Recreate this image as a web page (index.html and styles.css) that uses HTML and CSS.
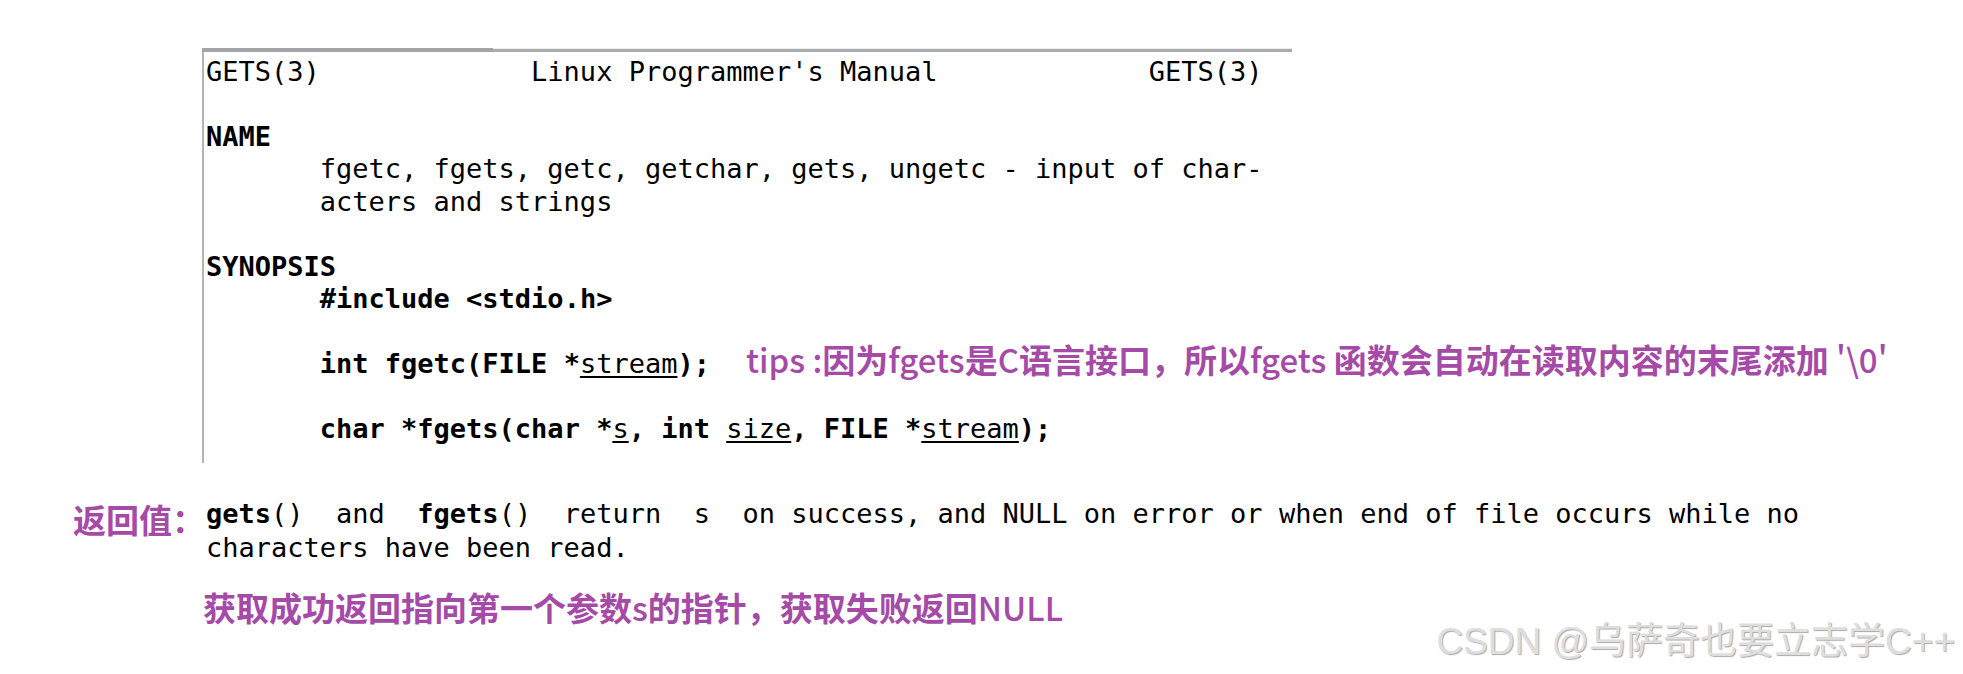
FILE: index.html
```html
<!DOCTYPE html>
<html lang="zh-CN">
<head>
<meta charset="utf-8">
<title>GETS(3)</title>
<link rel="stylesheet" href="styles.css">
</head>
<body>
<div class="page">
  <section class="man">
    <div class="rule"><span class="rule-dark"></span><span class="rule-light"></span></div>
    <div class="man-body">
<pre class="mono">GETS(3)             Linux Programmer's Manual             GETS(3)

<b>NAME</b>
       fgetc, fgets, getc, getchar, gets, ungetc - input of char-
       acters and strings

<b>SYNOPSIS</b>
       <b>#include &lt;stdio.h&gt;</b>

       <b>int fgetc(FILE *</b><u>stream</u><b>);</b><span class="tips"><span class="lat">tips :</span>因为<span class="lat">fgets</span>是<span class="lat">C</span>语言接口，所以<span class="lat">fgets </span>函数会自动在读取内容的末尾添加<span class="lat"> '\0'</span></span>

       <b>char *fgets(char *</b><u>s</u><b>, int </b><u>size</u><b>, FILE *</b><u>stream</u><b>);</b></pre>
    </div>
  </section>

  <section class="ret">
    <div class="ret-label">返回值：</div>
<pre class="mono ret-text"><b>gets</b>()  and  <b>fgets</b>()  return  s  on success, and NULL on error or when end of file occurs while no
characters have been read.</pre>
  </section>

  <div class="summary">获取成功返回指向第一个参数<span class="lat">s</span>的指针，获取失败返回<span class="lat">NULL</span></div>

  <div class="watermark">CSDN @乌萨奇也要立志学C++</div>
</div>
</body>
</html>
```

FILE: styles.css
```css
* { box-sizing: border-box; }

html, body {
  margin: 0;
  padding: 0;
  background: #ffffff;
}

.page {
  position: relative;
  width: 1963px;
  height: 674px;
  overflow: hidden;
  display: flex;
  flex-direction: column;
  align-items: flex-start;
}

.man {
  margin: 48px 0 0 202px;
  width: 1090px;
}

.rule {
  display: flex;
  height: 4px;
}

.rule-dark {
  width: 291px;
  background: #a2a4a6;
}

.rule-light {
  flex: 1;
  background: #a9abad;
  border-top: 1px solid #ececec;
}

.man-body {
  border-left: 2px solid #b4b4b4;
  padding: 4px 0 18px 2px;
}

.mono {
  margin: 0;
  font-family: "DejaVu Sans Mono", monospace;
  font-size: 27px;
  line-height: 32.45px;
  color: #000;
}

.mono b { font-weight: 700; }

.mono u {
  text-decoration: underline;
  text-decoration-thickness: 2px;
  text-underline-offset: 3px;
}

.tips {
  margin-left: 36px;
  font-family: "Noto Sans CJK SC", sans-serif;
  font-size: 33px;
  font-weight: 700;
  line-height: 0;
  color: #a54ba7;
}

.lat { font-weight: 500; }

.ret {
  display: flex;
  align-items: flex-start;
  margin-top: 34px;
}

.ret-label {
  width: 133px;
  margin-left: 73px;
  padding-top: 2px;
  font-family: "Noto Sans CJK SC", sans-serif;
  font-size: 33px;
  font-weight: 700;
  line-height: 40px;
  color: #a54ba7;
  white-space: nowrap;
}

.ret-text {
  line-height: 34px;
}

.summary {
  margin: 20px 0 0 203px;
  font-family: "Noto Sans CJK SC", sans-serif;
  font-size: 33px;
  font-weight: 700;
  line-height: 44px;
  color: #a54ba7;
  white-space: nowrap;
}

.watermark {
  position: absolute;
  right: 8px;
  top: 619px;
  font-family: "Liberation Sans", "Noto Sans CJK SC", sans-serif;
  font-size: 37px;
  font-weight: 400;
  line-height: 46px;
  color: #dedede;
  text-shadow: 1px 1px 1px #aaaaaa;
  white-space: nowrap;
}
```
